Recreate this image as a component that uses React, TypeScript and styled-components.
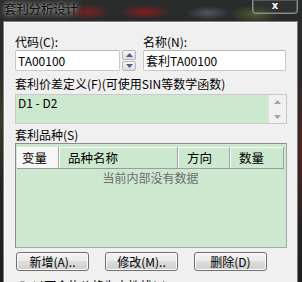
import React from "react";
import styled, { createGlobalStyle } from "styled-components";

const Global = createGlobalStyle`
  html, body { margin: 0; padding: 0; width: 302px; height: 282px; overflow: hidden; }
  body {
    background: #1c1f1e;
    font-family: "Noto Sans CJK SC", "Liberation Sans", sans-serif;
    font-size: 12px;
    color: #000;
  }
`;

const Frame = styled.div`
  position: relative;
  width: 302px;
  height: 282px;
  display: flex;
  flex-direction: column;
  background:
    radial-gradient(ellipse 22px 8px at 88px 12px, rgba(150, 30, 30, 0.75), transparent),
    radial-gradient(ellipse 26px 7px at 145px 12px, rgba(160, 25, 25, 0.8), transparent),
    radial-gradient(ellipse 22px 7px at 208px 13px, rgba(120, 130, 150, 0.5), transparent),
    radial-gradient(ellipse 25px 9px at 255px 14px, rgba(110, 130, 50, 0.55), transparent),
    radial-gradient(ellipse 6px 60px at 1px 120px, rgba(70, 80, 40, 0.6), transparent),
    radial-gradient(ellipse 5px 80px at 301px 150px, rgba(110, 30, 30, 0.7), transparent),
    linear-gradient(180deg, #2a2c2c 0%, #1d1f1f 100%);
`;

const TitleBar = styled.div`
  height: 21px;
  display: flex;
  align-items: flex-start;
  justify-content: space-between;
  flex: none;
`;

const Title = styled.div`
  margin: 2px 0 0 4px;
  font-size: 12.5px;
  line-height: 14px;
  letter-spacing: -0.2px;
  color: #111;
  text-shadow: 0 0 4px rgba(220, 220, 210, 0.9), 0 0 8px rgba(200, 200, 190, 0.6);
`;

const CloseBtn = styled.div`
  box-sizing: border-box;
  width: 46px;
  height: 14px;
  margin: 0 4px 0 0;
  border: 1px solid #8a8a8a;
  border-top: none;
  border-radius: 0 0 4px 4px;
  box-shadow: inset 0 0 0 1px rgba(255, 255, 255, 0.2);
  background: rgba(60, 60, 60, 0.3);
  color: #fff;
  font-family: "DejaVu Sans", sans-serif;
  font-weight: bold;
  font-size: 10px;
  line-height: 12px;
  text-align: center;
`;

const Client = styled.div`
  flex: 1;
  margin: 0 4px 0 3px;
  border: 1px solid #7b7b7b;
  border-bottom: none;
  background: #f0f0f0;
  padding: 13px 10px 0 11px;
  display: flex;
  flex-direction: column;
  box-shadow: inset 1px 1px 0 #fafafa;
`;

const Row = styled.div`
  display: flex;
  gap: 7px;
`;

const Field = styled.div<{ $w: number }>`
  width: ${(p) => p.$w}px;
  display: flex;
  flex-direction: column;
`;

const Label = styled.div<{ $mt?: number; $mb?: number }>`
  height: 14px;
  line-height: 14px;
  margin-top: ${(p) => p.$mt ?? 0}px;
  margin-bottom: ${(p) => p.$mb ?? 1}px;
  white-space: nowrap;
  color: #000;
`;

const InputLine = styled.div`
  display: flex;
  gap: 2px;
  align-items: stretch;
`;

const TextBox = styled.div<{ $w: number }>`
  box-sizing: border-box;
  width: ${(p) => p.$w}px;
  height: 21px;
  border: 1px solid #c9c9c9;
  border-top-color: #b5b5b5;
  border-radius: 2px;
  background: #fff;
  padding: 0 0 0 2px;
  line-height: 19px;
  white-space: nowrap;
  overflow: hidden;
`;

const Spin = styled.div`
  width: 14px;
  display: flex;
  flex-direction: column;
  gap: 1px;
`;

const SpinBtn = styled.div`
  box-sizing: border-box;
  flex: 1;
  border: 1px solid #b8b8b8;
  border-radius: 2px;
  background: linear-gradient(#f6f6f6, #dcdcdc);
  display: flex;
  align-items: center;
  justify-content: center;
`;

const Formula = styled.div`
  box-sizing: border-box;
  height: 30px;
  border: 1px solid #c9c9c9;
  background: #cce8cf;
  display: flex;
`;

const FormulaText = styled.div`
  flex: 1;
  padding: 0 0 0 2px;
  line-height: 15px;
`;

const VScroll = styled.div`
  width: 17px;
  background: #f1f1f1;
  border-left: 1px solid #e2e2e2;
  display: flex;
  flex-direction: column;
  justify-content: space-between;
  align-items: center;
  padding: 5px 0 4px;
`;

const ListBox = styled.div`
  box-sizing: border-box;
  height: 105px;
  border: 1px solid #8d8d8d;
  border-right-color: #a8a8a8;
  border-bottom-color: #a8a8a8;
  background: #cce8cf;
  padding: 3px 2px 0 1px;
  display: flex;
  flex-direction: column;
`;

const Header = styled.div`
  display: flex;
  height: 21px;
  border-bottom: 1px solid #9c9c9c;
`;

const HeadCell = styled.div<{ $w: number; $sel?: boolean }>`
  box-sizing: border-box;
  width: ${(p) => p.$w}px;
  flex: none;
  padding-left: ${(p) => (p.$sel ? 5 : 9)}px;
  font-size: 12.5px;
  line-height: 21px;
  background: ${(p) => (p.$sel ? "#f7f7f7" : "#cce8cf")};
  border-right: 1px solid #a3a3a3;
  box-shadow: inset 1px 0 0 #ffffff, inset 0 1px 0 #ffffff;
  white-space: nowrap;
`;

const Empty = styled.div`
  text-align: center;
  color: #6e6e6e;
  line-height: 16px;
  margin-top: 1px;
`;

const Buttons = styled.div`
  display: flex;
  gap: 16px;
  margin-top: 4px;
  padding-left: 1px;
`;

const Button = styled.div`
  box-sizing: border-box;
  width: 73px;
  height: 19px;
  border: 1px solid #707070;
  border-radius: 3px;
  background: linear-gradient(#f2f2f2 0%, #ebebeb 45%, #dddddd 50%, #cfcfcf 100%);
  box-shadow: inset 0 0 0 1px #fcfcfc;
  text-align: center;
  line-height: 17px;
  white-space: nowrap;
`;

const RadioRow = styled.div`
  display: flex;
  align-items: center;
  gap: 4px;
  margin-top: 8px;
  padding-left: 2px;
  line-height: 14px;
  white-space: nowrap;
`;

const Radio = styled.div`
  width: 11px;
  height: 11px;
  box-sizing: border-box;
  border-radius: 50%;
  border: 1px solid #8f8f8f;
  background: radial-gradient(circle, #ffffff 0%, #e4e4e4 100%);
`;

const Up = () => (
  <svg width="7" height="4" viewBox="0 0 7 4">
    <path d="M3.5 0 L7 4 L0 4 Z" fill="#4d6185" />
  </svg>
);
const Down = () => (
  <svg width="7" height="4" viewBox="0 0 7 4">
    <path d="M0 0 L7 0 L3.5 4 Z" fill="#4d6185" />
  </svg>
);
const GUp = () => (
  <svg width="7" height="4" viewBox="0 0 7 4">
    <path d="M3.5 0 L7 4 L0 4 Z" fill="#a3a3a3" />
  </svg>
);
const GDown = () => (
  <svg width="7" height="4" viewBox="0 0 7 4">
    <path d="M0 0 L7 0 L3.5 4 Z" fill="#a3a3a3" />
  </svg>
);

export default function App() {
  return (
    <>
      <Global />
      <Frame>
        <TitleBar>
          <Title>套利分析设计</Title>
          <CloseBtn>x</CloseBtn>
        </TitleBar>
        <Client>
          <Row>
            <Field $w={121}>
              <Label>代码(C):</Label>
              <InputLine>
                <TextBox $w={105}>TA00100</TextBox>
                <Spin>
                  <SpinBtn>
                    <Up />
                  </SpinBtn>
                  <SpinBtn>
                    <Down />
                  </SpinBtn>
                </Spin>
              </InputLine>
            </Field>
            <Field $w={143}>
              <Label>名称(N):</Label>
              <TextBox $w={143}>套利TA00100</TextBox>
            </Field>
          </Row>
          <Label $mt={6} $mb={3}>
            套利价差定义(F)(可使用SIN等数学函数)
          </Label>
          <Formula>
            <FormulaText>D1 - D2</FormulaText>
            <VScroll>
              <GUp />
              <GDown />
            </VScroll>
          </Formula>
          <Label $mt={4} $mb={1}>
            套利品种(S)
          </Label>
          <ListBox>
            <Header>
              <HeadCell $w={42} $sel>
                变量
              </HeadCell>
              <HeadCell $w={119}>品种名称</HeadCell>
              <HeadCell $w={52}>方向</HeadCell>
              <HeadCell $w={54}>数量</HeadCell>
            </Header>
            <Empty>当前内部没有数据</Empty>
          </ListBox>
          <Buttons>
            <Button>新增(A)..</Button>
            <Button>修改(M)..</Button>
            <Button>删除(D)</Button>
          </Buttons>
          <RadioRow>
            <Radio />
            <span>以下合约价格为中性线(L)</span>
          </RadioRow>
        </Client>
      </Frame>
    </>
  );
}
